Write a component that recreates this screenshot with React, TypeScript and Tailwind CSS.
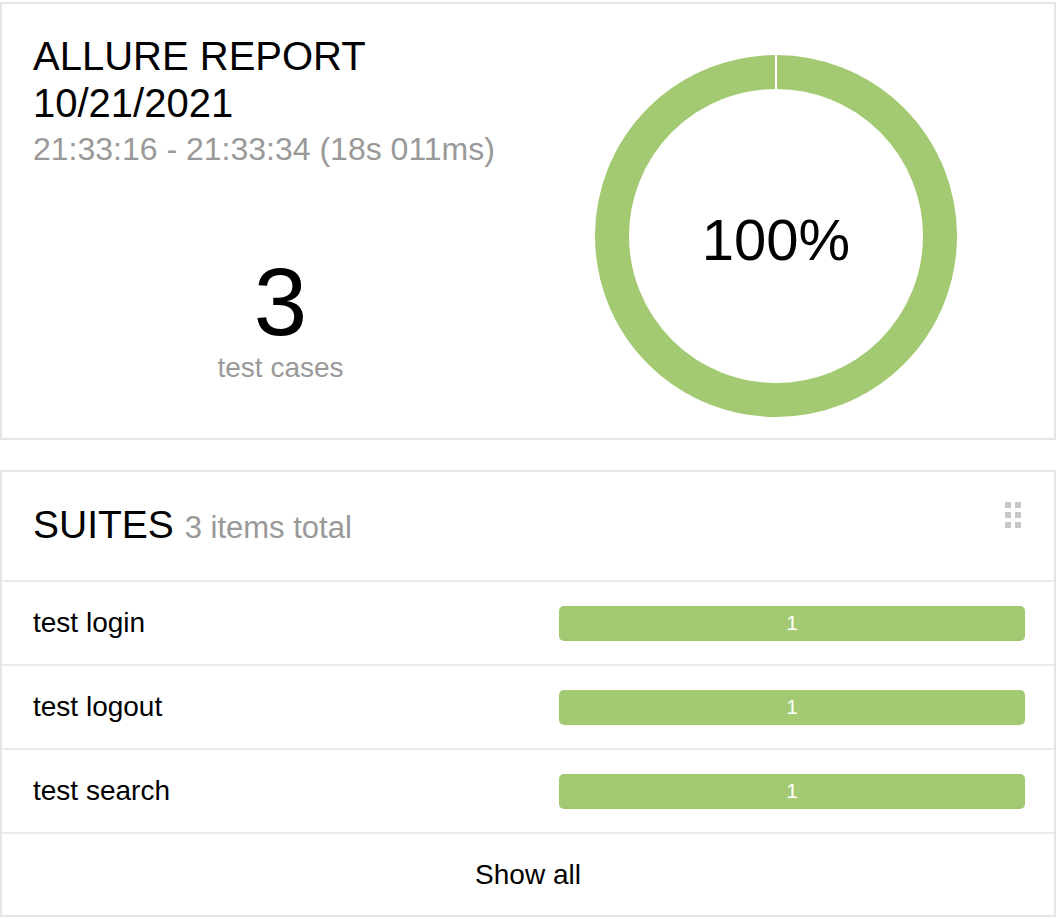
const suites = [
  { name: "test login", passed: 1 },
  { name: "test logout", passed: 1 },
  { name: "test search", passed: 1 },
];

function Donut() {
  return (
    <svg width="362" height="362" viewBox="0 0 362 362">
      <circle cx="181" cy="181" r="164" fill="none" stroke="#a3ca72" strokeWidth="34" />
      <rect x="180" y="0" width="2" height="36" fill="#ffffff" />
      <text
        x="181"
        y="205"
        textAnchor="middle"
        fontSize="58"
        fill="#000"
        fontFamily="'Liberation Sans', Arial, sans-serif"
      >
        100%
      </text>
    </svg>
  );
}

function DragHandle() {
  return (
    <div className="grid grid-cols-2 gap-x-[4px] gap-y-[4px]">
      {[0, 1, 2, 3, 4, 5].map((i) => (
        <span key={i} className="block h-[6px] w-[6px] bg-[#c8c8c8]" />
      ))}
    </div>
  );
}

export default function App() {
  return (
    <div className="min-h-screen bg-white pt-[2px] font-['Liberation_Sans',Arial,sans-serif] text-black">
      <section className="flex h-[438px] w-[1056px] border-2 border-[#e5e5e5] px-[31px] pt-[29px]">
        <div className="flex w-1/2 flex-col">
          <h1 className="text-[40px] leading-[47px]">
            ALLURE REPORT
            <br />
            10/21/2021
          </h1>
          <p className="text-[32px] leading-[44px] text-[#999]">21:33:16 - 21:33:34 (18s 011ms)</p>
          <div className="mt-[83px] flex flex-col items-center">
            <span className="text-[96px] leading-[96px]">3</span>
            <span className="mt-[2px] text-[28px] leading-[32px] text-[#999]">test cases</span>
          </div>
        </div>
        <div className="flex w-1/2 justify-center pt-[22px]">
          <Donut />
        </div>
      </section>

      <section className="relative mt-[30px] w-[1056px] border-2 border-[#e5e5e5]">
        <div className="flex h-[108px] items-center px-[31px]">
          <h2 className="text-[39px] leading-[40px]">
            SUITES <span className="text-[31px] text-[#999]">3 items total</span>
          </h2>
          <div className="absolute right-[33px] top-[30px]">
            <DragHandle />
          </div>
        </div>
        {suites.map((suite) => (
          <div
            key={suite.name}
            className="flex h-[84px] items-center justify-between border-t-2 border-[#ebebeb] pl-[31px] pr-[29px]"
          >
            <span className="text-[28px]">{suite.name}</span>
            <div className="flex h-[35px] w-[466px] items-center justify-center rounded-[5px] bg-[#a3ca72] text-[21px] text-white">
              {suite.passed}
            </div>
          </div>
        ))}
        <div className="flex h-[83px] items-center justify-center border-t-2 border-[#ebebeb] text-[28px]">
          Show all
        </div>
      </section>
    </div>
  );
}
